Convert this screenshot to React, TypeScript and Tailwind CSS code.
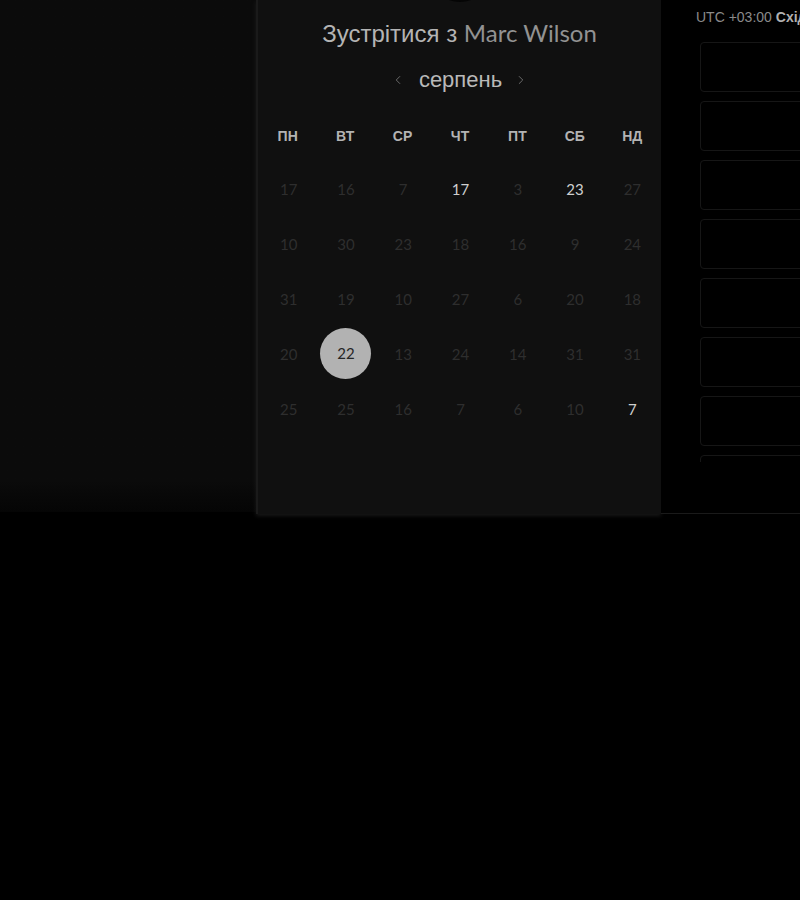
import React from 'react';
import { ChevronLeft, ChevronRight } from 'lucide-react';

const weekDays = ['ПН', 'ВТ', 'СР', 'ЧТ', 'ПТ', 'СБ', 'НД'];

// each cell: [day, active]
const weeks: [number, boolean][][] = [
  [[17, false], [16, false], [7, false], [17, true], [3, false], [23, true], [27, false]],
  [[10, false], [30, false], [23, false], [18, false], [16, false], [9, false], [24, false]],
  [[31, false], [19, false], [10, false], [27, false], [6, false], [20, false], [18, false]],
  [[20, false], [22, true], [13, false], [24, false], [14, false], [31, false], [31, false]],
  [[25, false], [25, false], [16, false], [7, false], [6, false], [10, false], [7, true]],
];

const selected = { week: 3, day: 1 };

const sans = { fontFamily: '"Liberation Sans", Arial, sans-serif' };
const geo = { fontFamily: 'Lato, "Liberation Sans", sans-serif' };

const App: React.FC = () => {
  return (
    <div className="w-[800px] h-[900px] bg-black overflow-hidden" style={sans}>
      <div className="flex h-[514px]">
        {/* left side */}
        <div className="w-[256px] h-[512px] bg-gradient-to-b from-[#0b0b0b] from-[94%] to-[#050505]" />

        {/* booking card */}
        <div className="w-[405px] h-[514px] bg-[#101010] border-l-2 border-[#1a1a1a] shadow-[0_2px_4px_rgba(40,40,40,0.6)] flex flex-col items-center">
          <div className="w-[64px] h-[64px] -mt-[62px] rounded-full bg-[#050505] shrink-0" />
          <h1 className="mt-[15px] text-[24px] leading-[32px] whitespace-nowrap">
            <span className="text-[#b4b4b4]">Зустрітися з </span>
            <span className="text-[#929292]" style={geo}>Marc Wilson</span>
          </h1>
          <div className="mt-[16px] flex items-center h-[28px]">
            <ChevronLeft size={14} strokeWidth={1.5} className="text-[#777]" />
            <span className="ml-[14px] mr-[12px] text-[22px] leading-[28px] text-[#b9b9b9]">серпень</span>
            <ChevronRight size={14} strokeWidth={1.5} className="text-[#777]" />
          </div>

          <div className="mt-[32px] w-full grid grid-cols-7 pl-[1px]">
            {weekDays.map((d) => (
              <div key={d} className="h-[20px] leading-[20px] text-center text-[14px] font-bold text-[#b3b3b3]">
                {d}
              </div>
            ))}
          </div>

          <div className="mt-[16px] w-full flex flex-col pl-[2px]" style={geo}>
            {weeks.map((week, wi) => (
              <div key={wi} className="grid grid-cols-7 h-[55px]">
                {week.map(([n, active], di) => {
                  const isSel = wi === selected.week && di === selected.day;
                  return (
                    <div key={di} className="flex items-center justify-center">
                      {isSel ? (
                        <div className="w-[51px] h-[51px] -mt-[3px] rounded-full bg-[#b2b2b2] flex items-center justify-center text-[15px] text-[#262626]">
                          {n}
                        </div>
                      ) : (
                        <span className={`text-[15px] ${active ? 'text-[#cfcfcf]' : 'text-[#2e2e2e]'}`}>{n}</span>
                      )}
                    </div>
                  );
                })}
              </div>
            ))}
          </div>
        </div>

        {/* time slots */}
        <div className="flex-1 h-[514px] bg-black border-b border-[#1a1a1a] overflow-hidden">
          <div className="pl-[35px] pt-[8px] h-[18px] leading-[18px] text-[14px] whitespace-nowrap">
            <span className="text-[#8a8a8a]">UTC +03:00 </span>
            <span className="font-bold text-[#b0b0b0]">Східноєвропейський час</span>
          </div>
          <div className="mt-[24px] ml-[39px] h-[420px] overflow-hidden flex flex-col gap-[9px]">
            {Array.from({ length: 8 }).map((_, i) => (
              <div key={i} className="w-[140px] h-[50px] shrink-0 rounded-[4px] border border-[#161616]" />
            ))}
          </div>
        </div>
      </div>
    </div>
  );
};

export default App;
